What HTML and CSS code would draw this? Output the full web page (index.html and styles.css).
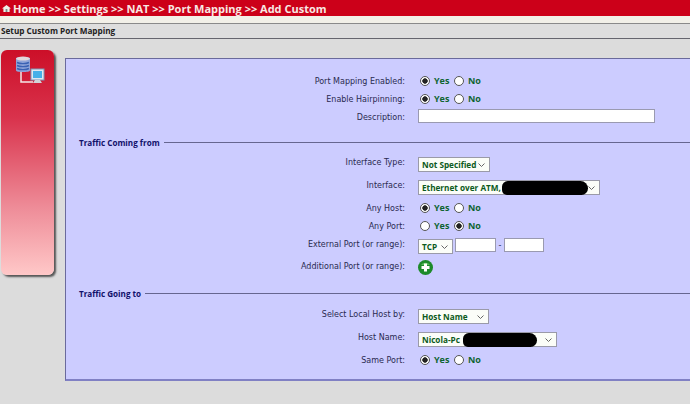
FILE: index.html
```html
<!DOCTYPE html>
<html lang="en">

<head>
	<meta charset="utf-8">
	<meta name="viewport" content="width=device-width, initial-scale=1.0">
	<title>Add Custom Port Mapping</title>
	<link rel="stylesheet" href="styles.css">
</head>

<body>

	<header class="crumbs">
		<svg class="home" width="9" height="9" viewBox="0 0 9 9">
			<path d="M0 4.5 4.5 1 9 4.5 7.6 4.5 7.6 8 1.4 8 1.4 4.5Z" fill="#eef0e8" />
			<rect x="3.6" y="5" width="1.8" height="3" fill="#7c8a8c" />
		</svg>
		<span>Home &gt;&gt; Settings &gt;&gt; NAT &gt;&gt; Port Mapping &gt;&gt; Add Custom</span>
	</header>
	<div class="stripe"></div>
	<h1 class="page-title">Setup Custom Port Mapping</h1>

	<div class="content">
		<aside class="side">
			<svg class="side-icon" width="30" height="30" viewBox="0 0 30 30">
				<path d="M6 16V26H18" fill="none" stroke="#f4e8e8" stroke-width="1.5" />
				<path d="M1 2.5C1 .5 15 .5 15 2.5V14.5C15 16.5 1 16.5 1 14.5Z" fill="#8fa4d8" />
				<ellipse cx="8" cy="2.6" rx="7" ry="2" fill="#e2d6dc" />
				<path d="M2 6.5C5 8 11 8 14 6.5M2 9.5C5 11 11 11 14 9.5M2 12.5C5 14 11 14 14 12.5" fill="none" stroke="#3a62b4" stroke-width="1.4" />
				<rect x="16" y="13" width="13" height="11" fill="#dfe8f0" stroke="#7a98b8" />
				<rect x="18" y="15" width="9" height="7" fill="#45b0e8" />
				<path d="M20 24H25L27 27H18Z" fill="#cfd4d8" />
			</svg>
		</aside>

		<form class="panel">
			<div class="row row-s">
				<label>Port Mapping Enabled:</label>
				<div class="ctl">
					<input type="radio" name="enabled" checked><span class="opt">Yes</span>
					<input type="radio" name="enabled"><span class="opt">No</span>
				</div>
			</div>
			<div class="row row-s">
				<label>Enable Hairpinning:</label>
				<div class="ctl">
					<input type="radio" name="hairpin" checked><span class="opt">Yes</span>
					<input type="radio" name="hairpin"><span class="opt">No</span>
				</div>
			</div>
			<div class="row row-s">
				<label>Description:</label>
				<div class="ctl"><input class="txt desc" type="text"></div>
			</div>

			<h2 class="legend legend-from">Traffic Coming from</h2>
			<div class="row row-m">
				<label>Interface Type:</label>
				<div class="ctl">
					<div class="pick w-type">Not Specified<svg class="chev" width="7" height="4" viewBox="0 0 7 4"><path d="M.5 .5 3.5 3.5 6.5 .5" /></svg></div>
				</div>
			</div>
			<div class="row row-l">
				<label>Interface:</label>
				<div class="ctl">
					<div class="pick w-iface">Ethernet over ATM,<span class="blot blot-iface"></span><svg class="chev" width="7" height="4" viewBox="0 0 7 4"><path d="M.5 .5 3.5 3.5 6.5 .5" /></svg></div>
				</div>
			</div>
			<div class="row row-s">
				<label>Any Host:</label>
				<div class="ctl">
					<input type="radio" name="host" checked><span class="opt">Yes</span>
					<input type="radio" name="host"><span class="opt">No</span>
				</div>
			</div>
			<div class="row row-s">
				<label>Any Port:</label>
				<div class="ctl">
					<input type="radio" name="port"><span class="opt">Yes</span>
					<input type="radio" name="port" checked><span class="opt">No</span>
				</div>
			</div>
			<div class="row row-m">
				<label>External Port (or range):</label>
				<div class="ctl">
					<div class="pick w-proto">TCP<svg class="chev" width="7" height="4" viewBox="0 0 7 4"><path d="M.5 .5 3.5 3.5 6.5 .5" /></svg></div>
					<input class="txt port-a" type="text"><span class="dash">-</span><input class="txt port-b" type="text">
				</div>
			</div>
			<div class="row row-m">
				<label>Additional Port (or range):</label>
				<div class="ctl">
					<svg width="15" height="15" viewBox="0 0 15 15">
						<circle cx="7.5" cy="7.5" r="7.5" fill="#1d8a2a" />
						<path d="M3 5A5 4 0 0 1 12 5Z" fill="#58bb5c" />
						<path d="M6 3.5H9V6H11.5V9H9V11.5H6V9H3.5V6H6Z" fill="#fff" />
					</svg>
				</div>
			</div>

			<h2 class="legend legend-to">Traffic Going to</h2>
			<div class="row row-m">
				<label>Select Local Host by:</label>
				<div class="ctl">
					<div class="pick w-by">Host Name<svg class="chev" width="7" height="4" viewBox="0 0 7 4"><path d="M.5 .5 3.5 3.5 6.5 .5" /></svg></div>
				</div>
			</div>
			<div class="row row-l">
				<label>Host Name:</label>
				<div class="ctl">
					<div class="pick w-name">Nicola-Pc<span class="blot blot-name"></span><svg class="chev" width="7" height="4" viewBox="0 0 7 4"><path d="M.5 .5 3.5 3.5 6.5 .5" /></svg></div>
				</div>
			</div>
			<div class="row row-s">
				<label>Same Port:</label>
				<div class="ctl">
					<input type="radio" name="same" checked><span class="opt">Yes</span>
					<input type="radio" name="same"><span class="opt">No</span>
				</div>
			</div>
		</form>
	</div>

</body>

</html>
```

FILE: styles.css
```css
html,
body {
	margin: 0;
	height: 404px;
	overflow: hidden;
}

body {
	background-color: #dcdcdc;
	font-family: "DejaVu Sans", Verdana, sans-serif;
	font-size: 8px;
	color: #2a2a50;
}

.crumbs {
	display: flex;
	align-items: center;
	gap: 2px;
	height: 16px;
	padding-left: 2px;
	background-color: #cc0019;
	color: #f8e8e4;
	font-family: "Open Sans", sans-serif;
	font-size: 11px;
	font-weight: bold;
}

.stripe {
	height: 7px;
	background-color: #f2f0e8;
}

.page-title {
	margin: 0;
	height: 14px;
	padding-left: 1px;
	border-top: 1px solid #8a8a8a;
	border-bottom: 1px solid #66666e;
	background-color: #dedede;
	color: #222;
	font-family: "Open Sans", sans-serif;
	font-size: 8.2px;
	line-height: 14px;
	font-weight: bold;
}

.content {
	display: flex;
	align-items: flex-start;
	padding: 11px 0 0 1px;
}

.side {
	flex: none;
	width: 53px;
	height: 225px;
	border-radius: 6px;
	background: linear-gradient(#cc0f28, #d9324c 30%, #ee8c98 70%, #ffc8c8);
	box-shadow: 2px 2px 2px #555;
}

.side-icon {
	display: block;
	margin: 6px 0 0 14px;
}

.panel {
	flex: 1;
	box-sizing: border-box;
	height: 323px;
	margin: 8px 0 0 11px;
	padding-top: 12px;
	border-top: 1px solid #6a6a9c;
	border-left: 1px solid #6a6a9c;
	border-bottom: 2px solid #8080c4;
	background-color: #ccccff;
}

.row {
	display: grid;
	grid-template-columns: 339px 1fr;
	column-gap: 13px;
	align-items: center;
}

.row-s {
	height: 18px;
}

.row-m {
	height: 22px;
}

.row-l {
	height: 24px;
}

.row label {
	text-align: right;
	padding-bottom: 1px;
}

.row-s label {
	padding-top: 2px;
	padding-bottom: 0;
}

.ctl {
	display: flex;
	align-items: center;
}

.ctl input[type="radio"] {
	appearance: none;
	box-sizing: border-box;
	width: 10px;
	height: 10px;
	margin: 2px 4px 0 2px;
	border: 1px solid #555;
	border-radius: 50%;
	background-color: #fff;
}

.ctl input[type="radio"]:checked {
	background: radial-gradient(circle, #222 2.4px, #fff 3px);
}

.opt {
	width: 18px;
	color: #0f6432;
	font-family: "Open Sans", sans-serif;
	font-weight: bold;
	font-size: 9px;
}

.opt + input + .opt {
	width: auto;
}

.txt {
	box-sizing: border-box;
	height: 14px;
	padding: 0;
	border: 1px solid #9a9ab0;
	background-color: #fff;
}

.desc {
	width: 237px;
}

.port-a {
	width: 41px;
	margin-left: 2px;
}

.port-b {
	width: 40px;
}

.dash {
	width: 8px;
	text-align: center;
}

.pick {
	position: relative;
	box-sizing: border-box;
	height: 15px;
	margin-top: 2px;
	padding-left: 3px;
	border: 1px solid #9a9aa8;
	background-color: #fbfdf8;
	color: #0c5a20;
	font-family: "Open Sans", sans-serif;
	font-size: 8.2px;
	font-weight: bold;
	line-height: 13px;
	white-space: nowrap;
}

.chev {
	position: absolute;
	right: 4px;
	top: 5px;
	fill: none;
	stroke: #666;
}

.w-type {
	width: 72px;
}

.w-iface {
	width: 182px;
}

.w-proto {
	width: 35px;
}

.w-by {
	width: 71px;
}

.w-name {
	width: 139px;
}

/* the black scribbles over the private names */
.blot {
	position: absolute;
	top: 0;
	height: 14px;
	border-radius: 7px 9px 8px 6px;
	background-color: #000;
}

.blot-iface {
	left: 83px;
	width: 86px;
}

.blot-name {
	left: 44px;
	width: 74px;
}

.legend {
	display: flex;
	align-items: center;
	gap: 4px;
	height: 12px;
	margin: 0;
	padding-left: 13px;
	color: #10106a;
	font-family: "Open Sans", sans-serif;
	font-size: 8.1px;
	font-weight: bold;
}

.legend::after {
	content: "";
	flex: 1;
	height: 1px;
	background-color: #666690;
}

.legend-from {
	margin: 11px 0 4px;
}

.legend-to {
	margin: 9px 0 5px;
}
```
